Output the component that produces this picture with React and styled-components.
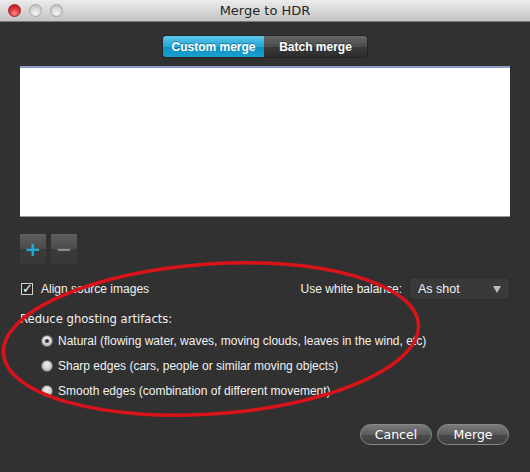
import React, { useState } from "react";
import styled, { createGlobalStyle } from "styled-components";

const Global = createGlobalStyle`
  html, body { margin: 0; padding: 0; background: #313131; }
  #root { width: 530px; height: 472px; overflow: hidden; }
`;

const options = [
  "Natural (flowing water, waves, moving clouds, leaves in the wind, etc)",
  "Sharp edges (cars, people or similar moving objects)",
  "Smooth edges (combination of different movement)",
];

export default function App() {
  const [mode, setMode] = useState("custom");
  const [align, setAlign] = useState(true);
  const [ghost, setGhost] = useState(0);

  return (
    <>
      <Global />
      <Window>
        <TitleBar>
          <Lights>
            <Light color="red" />
            <Light />
            <Light />
          </Lights>
          <Title>Merge to HDR</Title>
        </TitleBar>

        <Body>
          <Segmented>
            <Segment active={mode === "custom"} onClick={() => setMode("custom")}>
              Custom merge
            </Segment>
            <Segment active={mode === "batch"} onClick={() => setMode("batch")}>
              Batch merge
            </Segment>
          </Segmented>

          <ListBox />

          <ToolRow>
            <ToolButton plus>+</ToolButton>
            <ToolButton>−</ToolButton>
          </ToolRow>

          <OptionsRow>
            <CheckLabel onClick={() => setAlign(!align)}>
              <CheckBox>{align ? "✓" : ""}</CheckBox>
              Align source images
            </CheckLabel>
            <Balance>
              Use white balance:
              <Select>
                As shot
                <Arrow />
              </Select>
            </Balance>
          </OptionsRow>

          <Heading>Reduce ghosting artifacts:</Heading>
          <RadioList>
            {options.map((o, i) => (
              <RadioRow key={i} onClick={() => setGhost(i)}>
                <Radio checked={ghost === i} />
                {o}
              </RadioRow>
            ))}
          </RadioList>

          <Footer>
            <PillButton>Cancel</PillButton>
            <PillButton>Merge</PillButton>
          </Footer>
        </Body>

        <Annotation width="530" height="472" viewBox="0 0 530 472">
          <ellipse
            cx="211"
            cy="339"
            rx="208"
            ry="75"
            transform="rotate(-4 211 339)"
            fill="none"
            stroke="#d8141a"
            strokeWidth="3.5"
          />
        </Annotation>
      </Window>
    </>
  );
}

const Window = styled.div`
  position: relative;
  width: 530px;
  height: 472px;
  background: #313131;
  display: flex;
  flex-direction: column;
`;

const TitleBar = styled.div`
  height: 21px;
  border-bottom: 1px solid #7a7a7a;
  background: linear-gradient(#ececec, #d3d3d3 60%, #c4c4c4);
  display: flex;
  align-items: center;
  position: relative;
`;

const Lights = styled.div`
  display: flex;
  gap: 8px;
  padding-left: 8px;
`;

const Light = styled.span`
  width: 13px;
  height: 13px;
  border-radius: 50%;
  box-sizing: border-box;
  border: 1px solid ${(p) => (p.color === "red" ? "#a2242a" : "#a8a8a8")};
  background: ${(p) =>
    p.color === "red"
      ? "radial-gradient(circle at 50% 75%, #ff8d8a 0%, #e0383c 45%, #a81a1f 100%)"
      : "radial-gradient(circle at 50% 75%, #f4f4f4 0%, #d8d8d8 50%, #b4b4b4 100%)"};
`;

const Title = styled.div`
  position: absolute;
  left: 0;
  right: 0;
  text-align: center;
  font-family: "DejaVu Sans", sans-serif;
  font-size: 13px;
  color: #262626;
  pointer-events: none;
`;

const Body = styled.div`
  flex: 1;
  display: flex;
  flex-direction: column;
  padding: 14px 20px 0 20px;
  font-family: "Liberation Sans", Arial, sans-serif;
  color: #f2f2f2;
`;

const Segmented = styled.div`
  align-self: center;
  display: flex;
  height: 21px;
  border-radius: 3px;
  overflow: hidden;
  box-shadow: 0 0 0 1px #242424;
`;

const Segment = styled.div`
  display: flex;
  align-items: center;
  justify-content: center;
  width: ${(p) => (p.active ? "101px" : "103px")};
  font-size: 12px;
  font-weight: bold;
  color: #fff;
  cursor: pointer;
  text-shadow: 0 -1px 0 rgba(0, 0, 0, 0.35);
  background: ${(p) =>
    p.active
      ? "linear-gradient(#5ac8ea, #24a6d6 50%, #0d8fc2 51%, #1aa0d0)"
      : "linear-gradient(#666, #4c4c4c 50%, #3a3a3a 51%, #2c2c2c)"};
`;

const ListBox = styled.div`
  margin-top: 9px;
  height: 148px;
  background: #fff;
  border-top: 2px solid #8e9ccb;
  border-bottom: 1px solid #9a9a9a;
`;

const ToolRow = styled.div`
  display: flex;
  gap: 5px;
  margin-top: 17px;
`;

const ToolButton = styled.div`
  width: 26px;
  height: 30px;
  display: flex;
  align-items: center;
  justify-content: center;
  font-family: "DejaVu Sans", sans-serif;
  font-size: 20px;
  font-weight: bold;
  color: ${(p) => (p.plus ? "#23a9d8" : "#8a8a8a")};
  background: linear-gradient(#5e5e5e, #4a4a4a 50%, #3b3b3b 51%, #383838);
  line-height: 1;
`;

const OptionsRow = styled.div`
  display: flex;
  align-items: center;
  justify-content: space-between;
  margin-top: 14px;
  height: 21px;
  font-size: 12px;
`;

const CheckLabel = styled.label`
  display: flex;
  align-items: center;
  gap: 8px;
  padding-left: 1px;
  cursor: pointer;
`;

const CheckBox = styled.span`
  width: 12px;
  height: 12px;
  box-sizing: border-box;
  border: 1px solid #d0d0d0;
  background: #2a2a2a;
  color: #fff;
  font-size: 13px;
  line-height: 9px;
  text-align: center;
  font-family: "DejaVu Sans", sans-serif;
`;

const Balance = styled.div`
  display: flex;
  align-items: center;
  gap: 8px;
  margin-right: 1px;
`;

const Select = styled.div`
  position: relative;
  width: 99px;
  height: 21px;
  box-sizing: border-box;
  padding-left: 8px;
  display: flex;
  align-items: center;
  background: #393939;
  border-radius: 3px;
  box-shadow: 0 0 0 1px #2c2c2c;
  font-size: 12.5px;
`;

const Arrow = styled.span`
  position: absolute;
  right: 8px;
  top: 8px;
  width: 0;
  height: 0;
  border-left: 4px solid transparent;
  border-right: 4px solid transparent;
  border-top: 7px solid #bdbdbd;
`;

const Heading = styled.div`
  margin-top: 12px;
  font-family: "DejaVu Sans", sans-serif;
  font-size: 11.6px;
  line-height: 16px;
`;

const RadioList = styled.div`
  display: flex;
  flex-direction: column;
  gap: 9px;
  margin-top: 6px;
  padding-left: 21px;
`;

const RadioRow = styled.div`
  display: flex;
  align-items: center;
  gap: 5px;
  height: 16px;
  font-size: 12px;
  cursor: pointer;
`;

const Radio = styled.span`
  width: 12px;
  height: 12px;
  border-radius: 50%;
  box-sizing: border-box;
  border: 1px solid #6a6a6a;
  background: radial-gradient(circle at 50% 35%, #f2f2f2, #c4c4c4 70%, #9a9a9a);
  display: flex;
  align-items: center;
  justify-content: center;

  &::after {
    content: "";
    width: 4px;
    height: 4px;
    border-radius: 50%;
    background: #333;
    display: ${(p) => (p.checked ? "block" : "none")};
  }
`;

const Footer = styled.div`
  display: flex;
  justify-content: flex-end;
  gap: 5px;
  margin-top: 25px;
  padding-right: 1px;
`;

const PillButton = styled.div`
  width: 72px;
  height: 21px;
  box-sizing: border-box;
  border-radius: 11px;
  border: 1px solid #8a8a8a;
  background: linear-gradient(#7a7a7a, #5c5c5c 50%, #4a4a4a 51%, #3e3e3e);
  color: #fff;
  font-family: "DejaVu Sans", sans-serif;
  font-size: 12.5px;
  display: flex;
  align-items: center;
  justify-content: center;
`;

const Annotation = styled.svg`
  position: absolute;
  left: 0;
  top: 0;
  pointer-events: none;
`;
